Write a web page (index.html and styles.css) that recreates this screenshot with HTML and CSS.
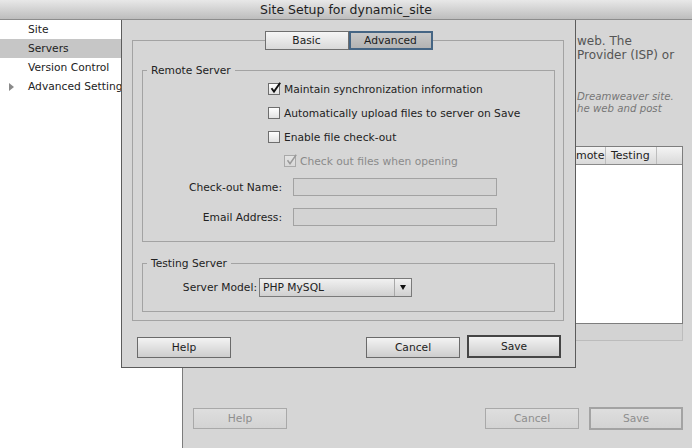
FILE: index.html
```html
<!DOCTYPE html>
<html lang="en">
<head>
    <meta charset="UTF-8">
    <title>Site Setup for dynamic_site</title>
    <link rel="stylesheet" href="styles.css">
</head>
<body>
    <div class="window">
        <div class="titlebar">Site Setup for dynamic_site</div>
        <div class="main">
            <ul class="sidebar">
                <li>Site</li>
                <li class="selected">Servers</li>
                <li>Version Control</li>
                <li class="group"><span class="arrow"></span>Advanced Settings</li>
            </ul>
            <div class="content">
                <div class="intro">
                    <div class="line"><span class="hidden-part">Here you'll select the server that will host your pages on the</span>web. The</div>
                    <div class="line"><span class="hidden-part">settings for this dialog box come from your Internet Service</span>Provider (ISP) or</div>
                </div>
                <div class="note">
                    <div class="line"><span class="hidden-part">Note: You do not need to complete this step to begin working on your</span>Dreamweaver site.</div>
                    <div class="line"><span class="hidden-part">You only need to define a remote server when you want to connect to t</span>he web and post</div>
                </div>
                <div class="server-table">
                    <div class="thead">
                        <div class="col col-name covered">Name</div>
                        <div class="col col-address covered">Address</div>
                        <div class="col col-connection covered">Connection</div>
                        <div class="col col-remote">Remote</div>
                        <div class="col col-testing">Testing</div>
                        <div class="col col-fill"></div>
                    </div>
                    <div class="tbody"></div>
                    <div class="tfoot"></div>
                </div>
                <div class="actions">
                    <button class="btn disabled">Help</button>
                    <span class="spacer"></span>
                    <button class="btn disabled">Cancel</button>
                    <button class="btn disabled default">Save</button>
                </div>
            </div>
        </div>

        <!-- sheet dialog sliding out of the title bar -->
        <div class="dialog">
            <div class="tabview">
                <div class="tabs">
                    <button class="tab">Basic</button>
                    <button class="tab active">Advanced</button>
                </div>

                <fieldset class="group-box remote">
                    <legend>Remote Server</legend>
                    <div class="checks">
                        <label class="check"><span class="cb checked"><svg viewBox="0 0 12 12"><path d="M2.5 6.2 L5 9.6 L11.2 0.8"/></svg></span>Maintain synchronization information</label>
                        <label class="check"><span class="cb"></span>Automatically upload files to server on Save</label>
                        <label class="check"><span class="cb"></span>Enable file check-out</label>
                        <label class="check sub disabled"><span class="cb checked"><svg viewBox="0 0 12 12"><path d="M2.5 6.2 L5 9.6 L11.2 0.8"/></svg></span>Check out files when opening</label>
                    </div>
                    <div class="form-row first">
                        <span class="form-label">Check-out Name:</span>
                        <span class="field"></span>
                    </div>
                    <div class="form-row">
                        <span class="form-label">Email Address:</span>
                        <span class="field"></span>
                    </div>
                </fieldset>

                <fieldset class="group-box testing">
                    <legend>Testing Server</legend>
                    <div class="form-row model">
                        <span class="form-label">Server Model:</span>
                        <span class="select">
                            <span class="select-value">PHP MySQL</span>
                            <span class="select-arrow"></span>
                        </span>
                    </div>
                </fieldset>
            </div>

            <div class="dialog-buttons">
                <button class="btn">Help</button>
                <span class="spacer"></span>
                <button class="btn">Cancel</button>
                <button class="btn default">Save</button>
            </div>
        </div>
    </div>
</body>
</html>
```

FILE: styles.css
```css
* {
    margin: 0;
    padding: 0;
    box-sizing: border-box;
}

body {
    width: 692px;
    height: 448px;
    overflow: hidden;
    background-color: #d6d6d6;
    font-family: "DejaVu Sans", Verdana, sans-serif;
    font-size: 10.7px;
    color: #222;
}

.window {
    position: relative;
    width: 692px;
    height: 448px;
    display: flex;
    flex-direction: column;
}

.titlebar {
    height: 20px;
    background: linear-gradient(#e8e8e8, #bdbdbd);
    border-bottom: 1px solid #8c8c8c;
    text-align: center;
    font-size: 12.5px;
    line-height: 19px;
    color: #1e1e1e;
}

.main {
    flex: 1;
    display: flex;
}

.sidebar {
    width: 183px;
    background-color: #fff;
    border-right: 1px solid #7c7c7c;
    list-style: none;
}

.sidebar li {
    height: 19px;
    line-height: 20px;
    padding-left: 28px;
    position: relative;
    white-space: nowrap;
}

.sidebar li.selected {
    background-color: #c6c6c6;
}

.sidebar .arrow {
    position: absolute;
    left: 9px;
    top: 6px;
    border-left: 5px solid #8a8a8a;
    border-top: 4px solid transparent;
    border-bottom: 4px solid transparent;
}

.content {
    flex: 1;
    padding: 14px 9px 0 11px;
    display: flex;
    flex-direction: column;
}

.line {
    white-space: nowrap;
    overflow: hidden;
}

/* start of each line sits under the sheet */
.hidden-part {
    display: inline-block;
    width: 383px;
    overflow: hidden;
    vertical-align: top;
    visibility: hidden;
}

.intro {
    line-height: 14px;
    font-size: 12px;
    color: #555;
}

.note {
    margin-top: 29px;
    line-height: 12px;
    font-size: 10.2px;
    font-style: italic;
    color: #777;
}

.server-table {
    margin-top: 31px;
    border: 1px solid #7d7d7d;
    border-bottom: none;
}

.thead {
    display: flex;
    height: 18px;
    line-height: 18px;
    background: linear-gradient(#f4f4f4, #d9d9d9);
    border-bottom: 1px solid #8a8a8a;
    font-size: 11px;
}

.col {
    padding-left: 5px;
    border-right: 1px solid #bdbdbd;
    white-space: nowrap;
    overflow: hidden;
}

.col.covered {
    visibility: hidden;
}

.col-name { width: 140px; }
.col-address { width: 130px; }
.col-connection { width: 93px; }
.col-remote { width: 48px; padding-left: 4px; }
.col-testing { width: 51px; }
.col-fill { flex: 1; border-right: none; }

.tbody {
    height: 159px;
    background-color: #fff;
    border-bottom: 1px solid #7d7d7d;
}

.tfoot {
    height: 17px;
    background-color: #d3d3d3;
    border: 1px solid #bcbcbc;
    border-top: none;
    margin-left: -1px;
    margin-right: -1px;
}

.actions {
    display: flex;
    margin-top: 67px;
    margin-left: -1px;
}

.spacer {
    flex: 1;
}

.btn {
    width: 94px;
    height: 21px;
    font-family: inherit;
    font-size: 10.7px;
    color: #1c1c1c;
    background: linear-gradient(#f3f3f3, #cdcdcd);
    border: 1px solid #6a6a6a;
}

.btn + .btn {
    margin-left: 10px;
}

.btn.default {
    height: 23px;
    margin-top: -1px;
    border: 2px solid #454545;
}

.btn.disabled {
    color: #8e8e8e;
    background: linear-gradient(#dedede, #d3d3d3);
    border-color: #a9a9a9;
}

.btn.disabled.default {
    border-color: #a3a3a3;
}

/* sheet */
.dialog {
    position: absolute;
    left: 121px;
    top: 20px;
    width: 455px;
    height: 348px;
    background-color: #d6d6d6;
    border: 1px solid #5c5c5c;
    border-top: none;
    padding: 0 11px 0 10px;
}

.tabview {
    margin-top: 20px;
    height: 281px;
    border: 1px solid #a3a3a3;
    padding: 0 8px 0 9px;
}

.tabs {
    display: flex;
    justify-content: center;
    margin-top: -10px;
    height: 19px;
}

.tab {
    width: 84px;
    height: 19px;
    font-family: inherit;
    font-size: 10.7px;
    color: #1c1c1c;
    background: linear-gradient(#f6f6f6, #d9d9d9);
    border: 1px solid #6f6f6f;
}

.tab.active {
    background: linear-gradient(#c9c9c9, #b3b3b3);
    border: 2px solid #456584;
}

.group-box {
    border: 1px solid #a3a3a3;
}

.group-box legend {
    margin-left: 4px;
    padding: 0 4px;
    line-height: 13px;
}

.group-box.remote {
    margin-top: 14px;
    height: 178px;
}

.group-box.testing {
    margin-top: 15px;
    height: 55px;
}

.checks {
    padding-left: 125px;
}

.check {
    display: flex;
    align-items: center;
    height: 24px;
    white-space: nowrap;
}

.check.sub {
    padding-left: 16px;
}

.check.disabled {
    color: #8a8a8a;
}

.cb {
    width: 12px;
    height: 12px;
    margin-right: 4px;
    border: 1px solid #6e6e6e;
    background: linear-gradient(#ffffff, #e2e2e2);
    position: relative;
}

.cb svg {
    position: absolute;
    left: 0;
    top: -2px;
    width: 12px;
    height: 12px;
    overflow: visible;
}

.cb svg path {
    fill: none;
    stroke: #111;
    stroke-width: 1.9;
}

.check.disabled .cb {
    border-color: #a9a9a9;
    background: linear-gradient(#e4e4e4, #d8d8d8);
}

.check.disabled .cb svg path {
    stroke: #9a9a9a;
    stroke-width: 1.5;
}

.form-row {
    display: flex;
    align-items: center;
    height: 18px;
    margin-top: 12px;
}

.form-row.first {
    margin-top: 5px;
}

.form-label {
    width: 139px;
    text-align: right;
    white-space: nowrap;
}

.field {
    width: 204px;
    height: 18px;
    margin-left: 11px;
    background-color: #d3d3d3;
    border: 1px solid #a2a2a2;
}

.form-row.model {
    margin-top: 8px;
}

.form-row.model .form-label {
    width: 114px;
}

.select {
    display: flex;
    width: 153px;
    height: 19px;
    margin-left: 2px;
    background: linear-gradient(#f1f1f1, #d0d0d0);
    border: 1px solid #7a7a7a;
}

.select-value {
    flex: 1;
    padding-left: 3px;
    line-height: 17px;
}

.select-arrow {
    width: 17px;
    border-left: 1px solid #a8a8a8;
    position: relative;
}

.select-arrow::after {
    content: '';
    position: absolute;
    left: 5px;
    top: 6px;
    border-top: 5px solid #111;
    border-left: 3.5px solid transparent;
    border-right: 3.5px solid transparent;
}

.dialog-buttons {
    display: flex;
    align-items: center;
    margin-top: 15px;
    padding: 0 3px 0 5px;
}

.dialog-buttons .btn + .btn {
    margin-left: 7px;
}
```
